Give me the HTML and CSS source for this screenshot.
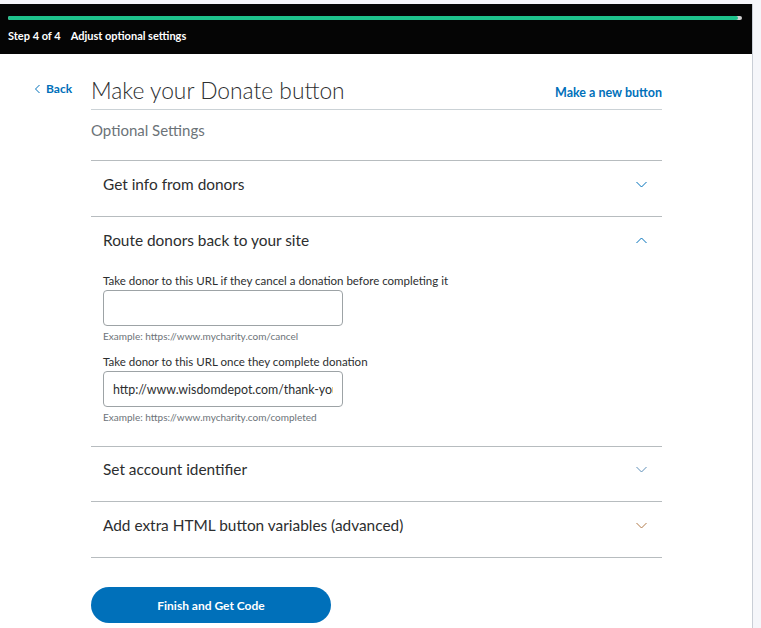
FILE: index.html
```html
<!DOCTYPE html>
<html>
<head>
<meta charset="utf-8">
<link rel="stylesheet" href="styles.css">
</head>
<body>
<div class="page">
  <header class="stepbar">
    <div class="progress"><div class="progress-fill"></div></div>
    <div class="steptext"><span>Step 4 of 4</span><span>Adjust optional settings</span></div>
  </header>
  <main class="main">
    <a class="back" href="#"><svg width="7" height="10" viewBox="0 0 7 10"><path d="M5.5 1 L1.5 5 L5.5 9" fill="none" stroke="#0070ba" stroke-width="1"/></svg>Back</a>
    <div class="content">
      <div class="titlerow">
        <h1 class="title">Make your Donate button</h1>
        <a class="newbtn" href="#">Make a new button</a>
      </div>
      <div class="subtitle">Optional Settings</div>
      <div class="accordion">
        <div class="section">
          <div class="sec-head"><span>Get info from donors</span><svg class="chev" width="11" height="7" viewBox="0 0 11 7"><path d="M0.5 1 L5.5 6 L10.5 1" fill="none" stroke="#0070ba" stroke-width="1"/></svg></div>
        </div>
        <div class="section">
          <div class="sec-head"><span>Route donors back to your site</span><svg class="chev" width="11" height="7" viewBox="0 0 11 7"><path d="M0.5 6 L5.5 1 L10.5 6" fill="none" stroke="#0070ba" stroke-width="1"/></svg></div>
          <div class="sec-body">
            <label class="field-label">Take donor to this URL if they cancel a donation before completing it</label>
            <input class="field" type="text" value="">
            <div class="hint">Example: https://www.mycharity.com/cancel</div>
            <label class="field-label second">Take donor to this URL once they complete donation</label>
            <input class="field" type="text" value="http://www.wisdomdepot.com/thank-you-donation">
            <div class="hint">Example: https://www.mycharity.com/completed</div>
          </div>
        </div>
        <div class="section short">
          <div class="sec-head"><span>Set account identifier</span><svg class="chev" width="11" height="7" viewBox="0 0 11 7"><path d="M0.5 1 L5.5 6 L10.5 1" fill="none" stroke="#5f8fb8" stroke-width="1"/></svg></div>
        </div>
        <div class="section">
          <div class="sec-head"><span>Add extra HTML button variables (advanced)</span><svg class="chev" width="11" height="7" viewBox="0 0 11 7"><path d="M0.5 1 L5.5 6 L10.5 1" fill="none" stroke="#b07a4a" stroke-width="1"/></svg></div>
        </div>
      </div>
      <button class="finish">Finish and Get Code</button>
    </div>
  </main>
</div>
</body>
</html>
```
FILE: styles.css
```css
html, body {
  margin: 0;
  padding: 0;
}
body {
  background: #f5f6fa;
  font-family: "Lato", "Open Sans", sans-serif;
  color: #2c2e2f;
  padding-top: 4px;
}
.page {
  width: 752px;
  min-height: 624px;
  background: #ffffff;
  border-right: 1px solid #c9ced6;
}
.stepbar {
  background: #050505;
  height: 50px;
  box-sizing: border-box;
  padding: 12px 8px 0 8px;
}
.progress {
  height: 4px;
  margin-right: 2px;
  background: #d0d0d0;
  border-radius: 2px;
}
.progress-fill {
  width: 99.5%;
  height: 100%;
  background: #1ec28b;
  border-radius: 2px;
}
.steptext {
  margin-top: 9px;
  color: #ffffff;
  font-family: "Lato", sans-serif;
  font-weight: 700;
  font-size: 11px;
  display: flex;
  gap: 10px;
}
.main {
  display: flex;
  padding-top: 24px;
}
.back {
  width: 57px;
  margin-left: 34px;
  margin-top: 3px;
  color: #0070ba;
  font-weight: 700;
  font-size: 12px;
  text-decoration: none;
  display: flex;
  align-items: flex-start;
  gap: 5px;
  height: 16px;
  line-height: 16px;
}
.back svg {
  margin-top: 3px;
}
.content {
  width: 571px;
}
.titlerow {
  display: flex;
  justify-content: space-between;
  align-items: flex-end;
  border-bottom: 1px solid #cbd2d6;
  padding-bottom: 7px;
}
.title {
  margin: 0;
  font-weight: 300;
  font-size: 22.8px;
  line-height: 24px;
  color: #2c2e2f;
}
.newbtn {
  color: #0070ba;
  font-weight: 700;
  font-size: 12.5px;
  text-decoration: none;
  margin-bottom: 2px;
}
.subtitle {
  font-size: 15px;
  color: #6c7378;
  padding-top: 11px;
  height: 51px;
  box-sizing: border-box;
  line-height: 18px;
  border-bottom: 1px solid #b7bcbf;
}
.section {
  border-bottom: 1px solid #b7bcbf;
}
.sec-head {
  height: 55px;
  box-sizing: border-box;
  padding: 14px 15px 0 12px;
  display: flex;
  align-items: flex-start;
  justify-content: space-between;
  font-size: 15.4px;
  line-height: 18px;
  color: #2c2e2f;
}
.section.short .sec-head {
  height: 54px;
  padding-top: 13px;
}
.chev {
  margin-top: 6px;
}
.sec-body {
  padding: 2px 12px 23px 12px;
}
.field-label {
  display: block;
  font-size: 11.5px;
  line-height: 14px;
  color: #2c2e2f;
}
.field-label.second {
  margin-top: 13px;
}
.field {
  display: block;
  width: 240px;
  height: 36px;
  box-sizing: border-box;
  margin-top: 2px;
  border: 1px solid #9da3a6;
  border-radius: 4px;
  padding: 0 9px;
  font-family: "Lato", sans-serif;
  font-size: 12.4px;
  color: #2c2e2f;
  background: #fff;
}
.hint {
  font-size: 10px;
  color: #6c7378;
  margin-top: 4px;
  line-height: 12px;
}
.finish {
  margin-top: 29px;
  width: 240px;
  height: 36px;
  border: none;
  border-radius: 18px;
  background: #0070ba;
  color: #ffffff;
  font-family: "Lato", sans-serif;
  font-weight: 700;
  font-size: 12px;
  cursor: pointer;
}
```
